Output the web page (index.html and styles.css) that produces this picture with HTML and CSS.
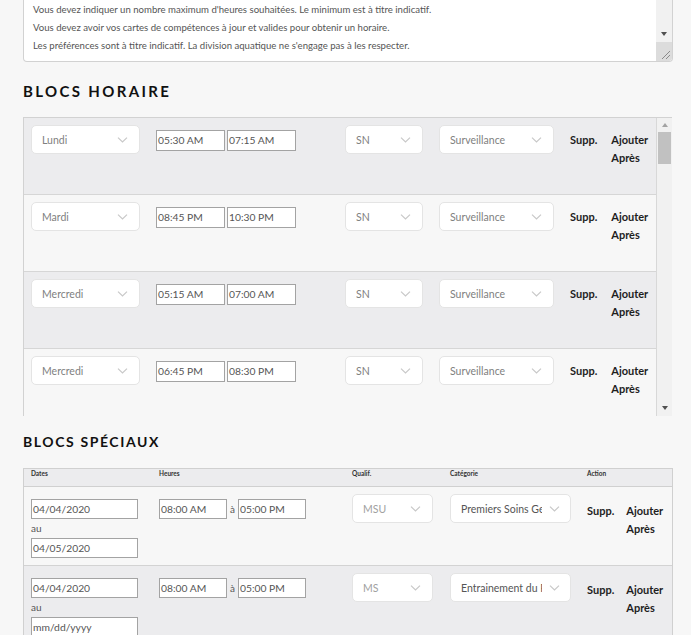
FILE: index.html
```html
<!DOCTYPE html>
<html lang="fr">
<head>
<meta charset="utf-8">
<title>Disponibilités</title>
<link rel="stylesheet" href="styles.css">
</head>
<body>
<div class="page">
  <div class="notes">
    <div class="notes-text">
      <p>Vous devez indiquer un nombre maximum d'heures souhaitées. Le minimum est à titre indicatif.</p>
      <p>Vous devez avoir vos cartes de compétences à jour et valides pour obtenir un horaire.</p>
      <p>Les préférences sont à titre indicatif. La division aquatique ne s'engage pas à les respecter.</p>
    </div>
    <div class="notes-scroll">
      <span class="arrow-down"></span>
      <span class="grip"><svg width="16" height="19" viewBox="0 0 16 19"><path d="M14 9 L6 17 M14 13 L10 17" stroke="#8a8a8a" stroke-width="1" fill="none"/></svg></span>
    </div>
  </div>

  <h2 class="section-title">BLOCS HORAIRE</h2>
  <div class="blocks">
    <div class="blocks-rows">
      <div class="brow alt">
        <div class="select day"><span>Lundi</span><svg width="11" height="6" viewBox="0 0 11 6"><path d="M1 0.6 L5.5 5 L10 0.6" fill="none" stroke="#c8c8c8" stroke-width="1.2"/></svg></div>
        <div class="times"><div class="field time">05:30 AM</div><div class="field time">07:15 AM</div></div>
        <div class="select qual"><span>SN</span><svg width="11" height="6" viewBox="0 0 11 6"><path d="M1 0.6 L5.5 5 L10 0.6" fill="none" stroke="#c8c8c8" stroke-width="1.2"/></svg></div>
        <div class="select cat"><span>Surveillance</span><svg width="11" height="6" viewBox="0 0 11 6"><path d="M1 0.6 L5.5 5 L10 0.6" fill="none" stroke="#c8c8c8" stroke-width="1.2"/></svg></div>
        <div class="actions"><span class="supp">Supp.</span><span class="add">Ajouter<br>Après</span></div>
      </div>
      <div class="brow">
        <div class="select day"><span>Mardi</span><svg width="11" height="6" viewBox="0 0 11 6"><path d="M1 0.6 L5.5 5 L10 0.6" fill="none" stroke="#c8c8c8" stroke-width="1.2"/></svg></div>
        <div class="times"><div class="field time">08:45 PM</div><div class="field time">10:30 PM</div></div>
        <div class="select qual"><span>SN</span><svg width="11" height="6" viewBox="0 0 11 6"><path d="M1 0.6 L5.5 5 L10 0.6" fill="none" stroke="#c8c8c8" stroke-width="1.2"/></svg></div>
        <div class="select cat"><span>Surveillance</span><svg width="11" height="6" viewBox="0 0 11 6"><path d="M1 0.6 L5.5 5 L10 0.6" fill="none" stroke="#c8c8c8" stroke-width="1.2"/></svg></div>
        <div class="actions"><span class="supp">Supp.</span><span class="add">Ajouter<br>Après</span></div>
      </div>
      <div class="brow alt">
        <div class="select day"><span>Mercredi</span><svg width="11" height="6" viewBox="0 0 11 6"><path d="M1 0.6 L5.5 5 L10 0.6" fill="none" stroke="#c8c8c8" stroke-width="1.2"/></svg></div>
        <div class="times"><div class="field time">05:15 AM</div><div class="field time">07:00 AM</div></div>
        <div class="select qual"><span>SN</span><svg width="11" height="6" viewBox="0 0 11 6"><path d="M1 0.6 L5.5 5 L10 0.6" fill="none" stroke="#c8c8c8" stroke-width="1.2"/></svg></div>
        <div class="select cat"><span>Surveillance</span><svg width="11" height="6" viewBox="0 0 11 6"><path d="M1 0.6 L5.5 5 L10 0.6" fill="none" stroke="#c8c8c8" stroke-width="1.2"/></svg></div>
        <div class="actions"><span class="supp">Supp.</span><span class="add">Ajouter<br>Après</span></div>
      </div>
      <div class="brow">
        <div class="select day"><span>Mercredi</span><svg width="11" height="6" viewBox="0 0 11 6"><path d="M1 0.6 L5.5 5 L10 0.6" fill="none" stroke="#c8c8c8" stroke-width="1.2"/></svg></div>
        <div class="times"><div class="field time">06:45 PM</div><div class="field time">08:30 PM</div></div>
        <div class="select qual"><span>SN</span><svg width="11" height="6" viewBox="0 0 11 6"><path d="M1 0.6 L5.5 5 L10 0.6" fill="none" stroke="#c8c8c8" stroke-width="1.2"/></svg></div>
        <div class="select cat"><span>Surveillance</span><svg width="11" height="6" viewBox="0 0 11 6"><path d="M1 0.6 L5.5 5 L10 0.6" fill="none" stroke="#c8c8c8" stroke-width="1.2"/></svg></div>
        <div class="actions"><span class="supp">Supp.</span><span class="add">Ajouter<br>Après</span></div>
      </div>
    </div>
    <div class="vscroll">
      <span class="arrow-up"></span>
      <span class="thumb"></span>
      <span class="arrow-down"></span>
    </div>
  </div>

  <h2 class="section-title second">BLOCS SPÉCIAUX</h2>
  <div class="special">
    <div class="thead">
      <div>Dates</div><div>Heures</div><div>Qualif.</div><div>Catégorie</div><div>Action</div>
    </div>
    <div class="trow">
      <div class="dates"><div class="field date">04/04/2020</div><div class="au">au</div><div class="field date">04/05/2020</div></div>
      <div class="hours"><div class="field stime">08:00 AM</div><span class="a">à</span><div class="field stime">05:00 PM</div></div>
      <div><div class="select squal"><span>MSU</span><svg width="11" height="6" viewBox="0 0 11 6"><path d="M1 0.6 L5.5 5 L10 0.6" fill="none" stroke="#c8c8c8" stroke-width="1.2"/></svg></div></div>
      <div><div class="select scat"><span>Premiers Soins Generaux</span><svg width="11" height="6" viewBox="0 0 11 6"><path d="M1 0.6 L5.5 5 L10 0.6" fill="none" stroke="#c8c8c8" stroke-width="1.2"/></svg></div></div>
      <div class="actions sact"><span class="supp">Supp.</span><span class="add">Ajouter<br>Après</span></div>
    </div>
    <div class="trow alt">
      <div class="dates"><div class="field date">04/04/2020</div><div class="au">au</div><div class="field date">mm/dd/yyyy</div></div>
      <div class="hours"><div class="field stime">08:00 AM</div><span class="a">à</span><div class="field stime">05:00 PM</div></div>
      <div><div class="select squal"><span>MS</span><svg width="11" height="6" viewBox="0 0 11 6"><path d="M1 0.6 L5.5 5 L10 0.6" fill="none" stroke="#c8c8c8" stroke-width="1.2"/></svg></div></div>
      <div><div class="select scat"><span>Entrainement du Personnel</span><svg width="11" height="6" viewBox="0 0 11 6"><path d="M1 0.6 L5.5 5 L10 0.6" fill="none" stroke="#c8c8c8" stroke-width="1.2"/></svg></div></div>
      <div class="actions sact"><span class="supp">Supp.</span><span class="add">Ajouter<br>Après</span></div>
    </div>
  </div>
</div>
</body>
</html>
```

FILE: styles.css
```css
* { box-sizing: border-box; }

body {
  margin: 0;
  background: #f7f7f7;
  font-family: Lato, "Open Sans", sans-serif;
  color: #222;
  overflow: hidden;
}

.page {
  padding-left: 23px;
  width: 691px;
}

/* notes textarea */
.notes {
  display: flex;
  width: 650px;
  height: 62px;
  background: #fff;
  border: 1px solid #d2d2d2;
  border-top: none;
  border-radius: 0 0 4px 4px;
  overflow: hidden;
}

.notes-text {
  flex: 1;
  padding: 1px 0 0 9px;
  font-size: 9.6px;
  color: #555;
}

.notes-text p {
  margin: 0;
  line-height: 18px;
}

.notes-scroll {
  width: 16px;
  background: #f1f1f1;
  display: flex;
  flex-direction: column;
  align-items: center;
}

.notes-scroll .arrow-down { margin-top: 32px; }

.grip {
  margin-top: auto;
  width: 16px;
  height: 19px;
  background: #dcdcdc;
  display: block;
}

.grip svg { display: block; }

.arrow-down,
.arrow-up {
  display: block;
  width: 0;
  height: 0;
  border-left: 3.5px solid transparent;
  border-right: 3.5px solid transparent;
}

.arrow-down { border-top: 4px solid #505050; }
.arrow-up { border-bottom: 4px solid #a3a3a3; }

/* section titles */
.section-title {
  margin: 19px 0 16px;
  font-size: 15px;
  line-height: 20px;
  font-weight: 700;
  letter-spacing: 2.35px;
  color: #111;
}

.section-title.second {
  margin-top: 16px;
  font-size: 14px;
  letter-spacing: 1.6px;
}

/* blocs horaire */
.blocks {
  display: flex;
  width: 649px;
  height: 299px;
  border-top: 1px solid #d2d2d2;
  border-left: 1px solid #d2d2d2;
  overflow: hidden;
}

.blocks-rows {
  width: 633px;
  border-right: 1px solid #d8d8d8;
}

.brow {
  display: flex;
  align-items: flex-start;
  height: 77px;
  padding: 7px 0 0 7px;
  border-bottom: 1px solid #d6d6d6;
}

.alt { background: #ececee; }

.select {
  display: flex;
  align-items: center;
  height: 29px;
  background: #fff;
  border: 1px solid #e4e4e4;
  border-radius: 5px;
  padding: 0 11px 0 10px;
  font-size: 10.5px;
  color: #808080;
}

.select span {
  flex: 1;
  overflow: hidden;
  white-space: nowrap;
}

.select svg { flex: none; display: block; }

.day { width: 109px; margin-right: 16px; }
.qual { width: 78px; margin-right: 16px; }
.cat { width: 115px; margin-right: 16px; }

.times {
  display: flex;
  gap: 2px;
  margin-top: 5px;
  margin-right: 49px;
}

.field {
  background: #fff;
  border: 1px solid #a3a3a3;
  font-size: 10.3px;
  color: #555;
  white-space: nowrap;
}

.time {
  width: 69px;
  height: 21px;
  line-height: 19px;
  padding-left: 1px;
}

.actions {
  display: flex;
  margin-top: 6px;
  font-size: 11px;
  font-weight: 700;
  line-height: 18px;
  color: #1e1e1e;
}

.actions .supp { margin-right: 14px; }

.vscroll {
  width: 15px;
  background: #f1f1f1;
  display: flex;
  flex-direction: column;
  align-items: center;
}

.vscroll .arrow-up { margin-top: 5px; }

.thumb {
  display: block;
  width: 13px;
  height: 32px;
  margin-top: 5px;
  background: #c1c1c1;
}

.vscroll .arrow-down { margin-top: auto; margin-bottom: 6px; }

/* blocs spéciaux */
.special {
  width: 650px;
  border: 1px solid #d0d0d0;
  border-bottom: none;
}

.thead,
.trow {
  display: grid;
  grid-template-columns: 128px 193px 98px 137px 92px;
}

.thead {
  height: 18px;
  background: #ececee;
  border-bottom: 1px solid #d0d0d0;
  font-size: 6.5px;
  font-weight: 700;
  line-height: 10px;
  color: #333;
}

.thead div { padding-left: 7px; }

.trow {
  border-bottom: 1px solid #d3d3d3;
}

.trow > div { padding: 7px 0 7px 7px; }

.dates { padding-top: 12px !important; }

.date {
  width: 107px;
  height: 20px;
  line-height: 18px;
  padding-left: 1px;
}

.au {
  height: 19px;
  line-height: 19px;
  font-size: 10px;
  color: #555;
}

.hours {
  display: flex;
  align-items: flex-start;
  padding-top: 12px !important;
}

.stime {
  width: 68px;
  height: 20px;
  line-height: 18px;
  padding-left: 1px;
}

.a {
  font-size: 10px;
  line-height: 20px;
  color: #555;
  margin: 0 3px 0 3px;
}

.squal { width: 81px; color: #a0a0a0; }
.scat { width: 121px; color: #555; padding-right: 10px; }
.scat span { margin-right: 7px; }

.sact { margin-top: 0; padding-top: 15px !important; }
.sact .supp { margin-right: 12px; }
```
